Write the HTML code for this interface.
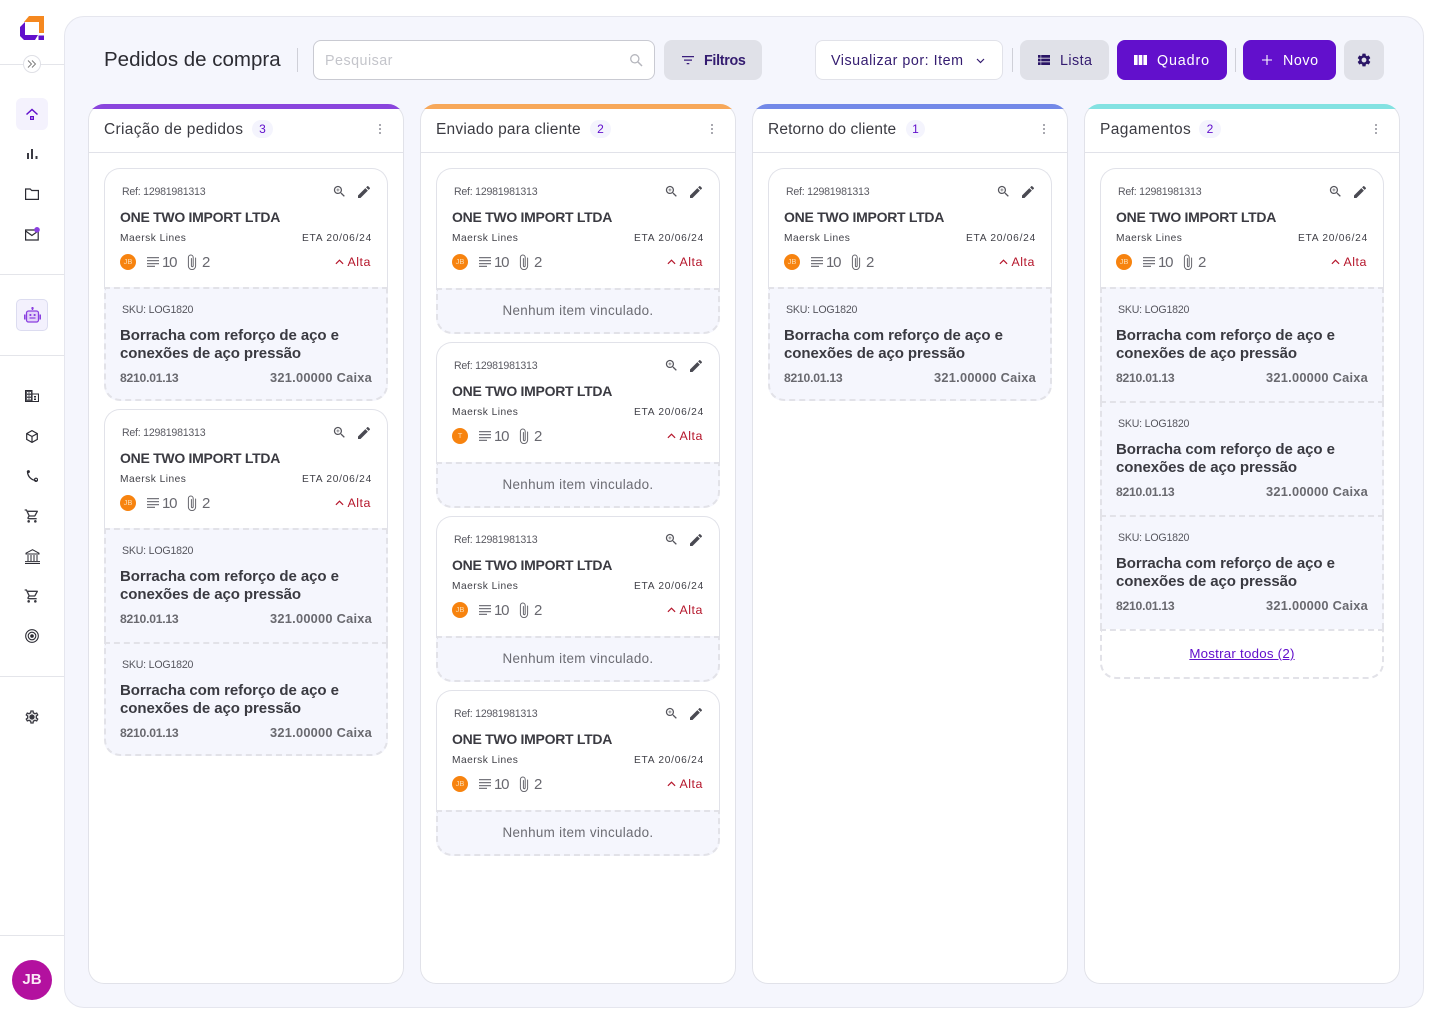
<!DOCTYPE html>
<html lang="pt-BR"><head><meta charset="utf-8"><title>Pedidos de compra</title>
<style>
*{box-sizing:border-box;margin:0;padding:0}
html,body{width:1440px;height:1024px;overflow:hidden;background:#fff;font-family:"Liberation Sans",sans-serif;color:#2b2b33}
.a,.t,svg{position:absolute}
.t{white-space:nowrap;line-height:1}
.hr{position:absolute;left:0;width:64px;height:1px;background:#e4e5ea}
#main{position:absolute;left:64px;top:16px;width:1360px;height:992px;background:#f5f6fd;border:1px solid #e5e6ee;border-radius:20px}
.btn{position:absolute;top:40px;height:40px;border-radius:8px}
.grey{background:#e0e1e8}.pur{background:#6210cc}
.col{position:absolute;top:104px;width:316px;height:880px;background:#fff;box-shadow:inset 0 0 0 1px #e1e2e9;border-radius:16px;overflow:hidden}
.col>*{margin:1px 0 0 1px}
.col>.bar{position:absolute;margin:0;left:0;top:0;width:100%;height:5px}
.ch{position:absolute;left:0;top:47px;width:100%;height:1px;background:#e1e2e9}
.ct{left:15px;top:17px;font-size:15.5px;color:#3b3b42}
.bd{position:absolute;top:15px;height:18px;border-radius:9px;background:#f4f4fd;color:#6210cc;font-size:12px;line-height:18px;text-align:center}
.dots{position:absolute;left:290px;top:19px;width:2px;height:2px;background:#a9a9b0;box-shadow:0 4px 0 #a9a9b0,0 8px 0 #a9a9b0}
.card{position:absolute;left:15px;width:284px;background:#fff;border-radius:16px}
.cb{position:absolute;left:0;top:0;width:284px;height:121px;border:1px solid #e1e2e9;border-bottom:0;border-radius:16px 16px 0 0}
.ref{left:18px;top:19px;font-size:10.6px;letter-spacing:-.24px;color:#5a5a62}
.co{left:16px;top:42px;font-size:14px;font-weight:bold;letter-spacing:-.28px;color:#3a3a41}
.ml{left:16px;top:66px;font-size:10.2px;letter-spacing:.48px;color:#3f3f46}
.eta{right:16px;top:66px;font-size:10.2px;letter-spacing:.75px;color:#3f3f46}
.av{position:absolute;left:16px;top:86px;width:16px;height:16px;border-radius:50%;background:#f7830f;color:#fcdcb0;font-size:7.5px;line-height:16px;text-align:center}
.n{font-size:15px;color:#68686f;top:87px}
.n10{letter-spacing:-1.2px}
.alta{right:17px;top:88px;font-size:12.4px;letter-spacing:.55px;color:#b5162b}
.it{position:absolute;left:0;width:284px;height:114px;background:#f5f6fd;border:2px dashed #e2e2e8;border-width:2px 2px 0 2px}
.it.last{height:114px;border-bottom-width:2px;border-radius:0 0 16px 16px}
.sku{left:16px;top:16px;font-size:10.6px;letter-spacing:-.2px;color:#56565e}
.ti{left:14px;top:38px;font-size:15px;font-weight:bold;line-height:18px;letter-spacing:-.07px;color:#3a3a41;white-space:normal;width:262px}
.nc{left:14px;top:83px;font-size:12.2px;font-weight:bold;letter-spacing:-.26px;color:#69696f}
.qt{right:14px;top:83px;font-size:12.8px;font-weight:bold;letter-spacing:.25px;color:#69696f}
.em{position:absolute;left:0;top:120px;width:284px;height:46px;background:#f5f6fd;border:2px dashed #e2e2e8;border-radius:0 0 16px 16px;font-size:13.4px;letter-spacing:.33px;color:#6b6b72;line-height:42px;text-align:center}
.ic{fill:#3a3a42}
</style></head>
<body>
<svg width="0" height="0" style="position:absolute">
<symbol id="zoom" viewBox="0 0 24 24"><path d="M15.5 14h-.79l-.28-.27C15.41 12.59 16 11.11 16 9.5 16 5.91 13.09 3 9.5 3S3 5.91 3 9.5 5.91 16 9.5 16c1.61 0 3.09-.59 4.23-1.57l.27.28v.79l5 4.99L20.49 19l-4.99-5zm-6 0C7.01 14 5 11.99 5 9.5S7.01 5 9.5 5 14 7.01 14 9.5 11.99 14 9.5 14z"/><path d="M12 10h-2v2H9v-2H7V9h2V7h1v2h2v1z"/></symbol>
<symbol id="edit" viewBox="0 0 24 24"><path d="M3 17.25V21h3.75L17.81 9.94l-3.75-3.75L3 17.25zM20.71 7.04c.39-.39.39-1.02 0-1.41l-2.34-2.34c-.39-.39-1.02-.39-1.41 0l-1.83 1.83 3.75 3.75 1.83-1.83z"/></symbol>
<symbol id="lines" viewBox="0 0 12 10"><path d="M0 0h12v1.200H0zM0 3h12v1.200H0zM0 6h12v1.200H0zM0 8.800h8V10H0z"/></symbol>
<symbol id="clip" viewBox="0 0 10 16"><path d="M8.600 4v8a3.600 3.600 0 0 1-7.200 0V3.400a2.400 2.400 0 0 1 4.800 0v8.400a.9.9 0 0 1-1.800 0V4.500" fill="none" stroke="currentColor" stroke-width="1" stroke-linecap="round"/></symbol>
<symbol id="up" viewBox="0 0 10 6"><path d="M1 5l4-4 4 4" fill="none" stroke="#b5162b" stroke-width="1.300"/></symbol>
<symbol id="gear" viewBox="0 0 24 24"><path d="M19.14 12.94c.04-.3.06-.61.06-.94 0-.32-.02-.64-.07-.94l2.03-1.58c.18-.14.23-.41.12-.61l-1.92-3.32c-.12-.22-.37-.29-.59-.22l-2.39.96c-.5-.38-1.03-.7-1.62-.94l-.36-2.54c-.04-.24-.24-.41-.48-.41h-3.84c-.24 0-.43.17-.47.41l-.36 2.54c-.59.24-1.13.57-1.62.94l-2.39-.96c-.22-.08-.47 0-.59.22L2.74 8.87c-.12.21-.08.47.12.61l2.03 1.58c-.05.3-.09.63-.09.94s.02.64.07.94l-2.03 1.58c-.18.14-.23.41-.12.61l1.92 3.32c.12.22.37.29.59.22l2.39-.96c.5.38 1.03.7 1.62.94l.36 2.54c.05.24.24.41.48.41h3.84c.24 0 .44-.17.47-.41l.36-2.54c.59-.24 1.13-.56 1.62-.94l2.39.96c.22.08.47 0 .59-.22l1.92-3.32c.12-.22.07-.47-.12-.61l-2.01-1.58zM12 15.6c-1.98 0-3.6-1.62-3.6-3.6s1.62-3.6 3.6-3.6 3.6 1.62 3.6 3.6-1.62 3.6-3.6 3.6z"/></symbol>
<symbol id="gearo" viewBox="0 0 24 24"><path d="M19.43 12.98c.04-.32.07-.64.07-.98 0-.34-.03-.66-.07-.98l2.11-1.65c.19-.15.24-.42.12-.64l-2-3.46c-.09-.16-.26-.25-.44-.25-.06 0-.12.01-.17.03l-2.49 1c-.52-.4-1.08-.73-1.69-.98l-.38-2.65C14.46 2.18 14.25 2 14 2h-4c-.25 0-.46.18-.49.42l-.38 2.65c-.61.25-1.17.59-1.69.98l-2.49-1c-.06-.02-.12-.03-.18-.03-.17 0-.34.09-.43.25l-2 3.46c-.13.22-.07.49.12.64l2.11 1.65c-.04.32-.07.65-.07.98 0 .33.03.66.07.98l-2.11 1.65c-.19.15-.24.42-.12.64l2 3.46c.09.16.26.25.44.25.06 0 .12-.01.17-.03l2.49-1c.52.4 1.08.73 1.69.98l.38 2.65c.03.24.24.42.49.42h4c.25 0 .46-.18.49-.42l.38-2.65c.61-.25 1.17-.59 1.69-.98l2.49 1c.06.02.12.03.18.03.17 0 .34-.09.43-.25l2-3.46c.12-.22.07-.49-.12-.64l-2.11-1.65zm-1.98-1.71c.04.31.05.52.05.73 0 .21-.02.43-.05.73l-.14 1.13.89.7 1.08.84-.7 1.21-1.27-.51-1.04-.42-.9.68c-.43.32-.84.56-1.25.73l-1.06.43-.16 1.13-.2 1.35h-1.4l-.19-1.35-.16-1.13-1.06-.43c-.43-.18-.83-.41-1.23-.71l-.91-.7-1.06.43-1.27.51-.7-1.21 1.08-.84.89-.7-.14-1.13c-.03-.31-.05-.54-.05-.74s.02-.43.05-.73l.14-1.13-.89-.7-1.08-.84.7-1.21 1.27.51 1.04.42.9-.68c.43-.32.84-.56 1.25-.73l1.06-.43.16-1.13.2-1.35h1.39l.19 1.35.16 1.13 1.06.43c.43.18.83.41 1.23.71l.91.7 1.06-.43 1.27-.51.7 1.21-1.07.85-.89.7.14 1.13zM12 8c-2.21 0-4 1.79-4 4s1.79 4 4 4 4-1.79 4-4-1.79-4-4-4z"/></symbol>
<symbol id="cart" viewBox="0 0 24 24"><path d="M15.55 13c.75 0 1.41-.41 1.75-1.03l3.58-6.49c.37-.66-.11-1.48-.87-1.48H5.21l-.94-2H1v2h2l3.6 7.59-1.35 2.44C4.52 15.37 5.48 17 7 17h12v-2H7l1.1-2h7.45zM6.16 6h12.15l-2.76 5H8.53L6.16 6zM7 18c-1.1 0-1.99.9-1.99 2S5.9 22 7 22s2-.9 2-2-.9-2-2-2zm10 0c-1.1 0-1.99.9-1.99 2s.89 2 1.99 2 2-.9 2-2-.9-2-2-2z"/></symbol>
</svg>

<!-- logo -->
<svg style="left:20px;top:16px" width="24" height="24" viewBox="0 0 24 24"><path d="M9 0h15v17h-5V6H4z" fill="#f5881f"/><path d="M5 6L0 11v9l4 4h11l3-5H5z" fill="#6210cc"/><path d="M18.500 19.500H24V24h-5.500z" fill="#6210cc"/></svg>
<div class="hr" style="top:64px"></div>
<div class="a" style="left:23px;top:55px;width:18px;height:18px;border-radius:50%;background:#fff;border:1px solid #dfe0e6"></div>
<svg style="left:27px;top:60px" width="10" height="8" viewBox="0 0 10 8"><path d="M1 .5L4.500 4 1 7.500M5 .5L8.500 4 5 7.500" fill="none" stroke="#777" stroke-width=".9"/></svg>

<div class="a" style="left:16px;top:98px;width:32px;height:32px;border-radius:6px;background:#f4f2fd"></div>
<svg style="left:26px;top:108px" width="12" height="12" viewBox="0 0 12 12"><path d="M.5 6.500L6 1.500l5.500 5" fill="none" stroke="#6210cc" stroke-width="1.500"/><path d="M4 8h4v4H4z" fill="#6210cc"/><path d="M5.300 9.300h1.400v1.400H5.300z" fill="#f4f2fd"/></svg>
<svg style="left:27px;top:149px" width="11" height="10" viewBox="0 0 11 10"><path d="M0 4h2v6H0zM4 0h2v10H4zM8.500 7h2v3h-2z" fill="#3a3a42"/></svg>
<svg style="left:25px;top:188px" width="14" height="12" viewBox="0 0 14 12"><path d="M.6 1h4.600l1.500 1.500h6.700v8.900H.6z" fill="none" stroke="#2b2b33" stroke-width="1.200"/></svg>
<svg style="left:25px;top:227px" width="15" height="14" viewBox="0 0 15 14"><path d="M.6 3h12.600v10H.6z" fill="none" stroke="#2b2b33" stroke-width="1.200"/><path d="M.6 4l6.300 4.500L13.200 4" fill="none" stroke="#2b2b33" stroke-width="1.200"/><circle cx="12" cy="2.800" r="2.800" fill="#8a3fe0"/></svg>
<div class="hr" style="top:274px"></div>
<div class="a" style="left:16px;top:299px;width:32px;height:32px;border-radius:5px;background:#f3f1fd;border:1px solid #dcdcf0"></div>
<svg style="left:24px;top:307px" width="17" height="16" viewBox="0 0 17 16"><path d="M8.500 0v3" stroke="#8a3fe0" stroke-width="1.400"/><circle cx="8.500" cy="1.200" r="1.200" fill="#8a3fe0"/><rect x="2.500" y="4" width="12" height="11" rx="2" fill="#e3d3f9" stroke="#8a3fe0" stroke-width="1.300"/><path d="M0 7.500h1.500v5H0zM15.500 7.500H17v5h-1.500z" fill="#8a3fe0"/><rect x="5.500" y="7" width="1.800" height="2" fill="#8a3fe0"/><rect x="9.700" y="7" width="1.800" height="2" fill="#8a3fe0"/><path d="M5.500 11h6" stroke="#8a3fe0" stroke-width="1.200"/></svg>
<div class="hr" style="top:355px"></div>
<svg style="left:25px;top:390px" width="14" height="12" viewBox="0 0 14 12"><path d="M.5.500h6.500v11H.500z" fill="#55555c" stroke="#2b2b33" stroke-width="1"/><path d="M7 4h6.500v7.500H7z" fill="none" stroke="#2b2b33" stroke-width="1.100"/><path d="M2 2h1.500v1.500H2zM4.500 2H6v1.500H4.500zM2 5h1.500v1.500H2zM4.500 5H6v1.500H4.500zM2 8h1.500v1.500H2zM4.500 8H6v1.500H4.500z" fill="#fff"/><path d="M9 6h2v1.500H9zM9 8.500h2V10H9z" fill="#2b2b33"/></svg>
<svg style="left:26px;top:430px" width="12" height="13" viewBox="0 0 12 13"><path d="M6 .6l5.300 3v5.800L6 12.400.7 9.400V3.600zM.7 3.600L6 6.500l5.300-2.900M6 6.500v5.900" fill="none" stroke="#2b2b33" stroke-width="1.200"/></svg>
<svg style="left:26px;top:470px" width="12" height="12" viewBox="0 0 12 12"><path d="M1.500 1.200C1.500 6.500 5.500 10.500 10.500 10.500" fill="none" stroke="#2b2b33" stroke-width="1.300"/><circle cx="2.400" cy="1.600" r="1.500" fill="#2b2b33"/><circle cx="10" cy="9.800" r="1.600" fill="none" stroke="#2b2b33" stroke-width="1.100"/></svg>
<svg class="ic" style="left:24px;top:508px" width="16" height="16"><use href="#cart"/></svg>
<svg style="left:25px;top:549px" width="15" height="15" viewBox="0 0 15 15"><path d="M7.500.7L14 4.200v.8H1v-.8z" fill="none" stroke="#2b2b33" stroke-width="1"/><path d="M3 6v6M6 6v6M9 6v6M12 6v6" stroke="#2b2b33" stroke-width="1"/><path d="M0 12.600h15M0 14.500h15" stroke="#2b2b33" stroke-width="1"/></svg>
<svg class="ic" style="left:24px;top:588px" width="16" height="16"><use href="#cart"/></svg>
<svg style="left:25px;top:629px" width="14" height="14" viewBox="0 0 14 14"><g fill="none" stroke="#2b2b33"><circle cx="7" cy="7" r="6.300" stroke-width="1.100"/><circle cx="7" cy="7" r="3.800" stroke-width="1.100"/></g><circle cx="7" cy="7" r="1.800" fill="#2b2b33"/></svg>
<div class="hr" style="top:676px"></div>
<svg class="ic" style="left:24px;top:709px" width="16" height="16"><use href="#gearo"/></svg>
<div class="hr" style="top:935px"></div>
<div class="a" style="left:12px;top:960px;width:40px;height:40px;border-radius:50%;background:#b3119f;color:#fbe9f7;font-size:15px;font-weight:bold;line-height:40px;text-align:center">JB</div>

<div id="main"></div>

<!-- toolbar -->
<div class="t" style="left:104px;top:50px;font-size:20.500px;color:#2c2c33">Pedidos de compra</div>
<div class="a" style="left:297px;top:48px;width:1px;height:24px;background:#cfd0d8"></div>
<div class="a" style="left:313px;top:40px;width:342px;height:40px;background:#fff;border:1px solid #c9cad2;border-radius:8px"></div>
<div class="t" style="left:325px;top:54px;font-size:14.300px;letter-spacing:.48px;color:#c4c5cb">Pesquisar</div>
<svg style="left:629px;top:53px" width="14" height="14" viewBox="0 0 14 14"><circle cx="5.800" cy="5.800" r="4.100" fill="none" stroke="#b5b6bd" stroke-width="1.300"/><path d="M9 9l4 4" stroke="#b5b6bd" stroke-width="1.500"/></svg>
<div class="btn grey" style="left:664px;width:98px"></div>
<svg style="left:682px;top:56px" width="12" height="9" viewBox="0 0 12 9"><path d="M0 0h12v1.300H0zM2 3.500h8v1.300H2zM4.700 7h2.600v1.300H4.700z" fill="#3a1d7c"/></svg>
<div class="t" style="left:704px;top:54px;font-size:14.300px;font-weight:bold;letter-spacing:-.3px;color:#341c70">Filtros</div>

<div class="a" style="left:815px;top:40px;width:188px;height:40px;background:#fff;border:1px solid #e1e2e9;border-radius:8px"></div>
<div class="t" style="left:831px;top:54px;font-size:14.300px;letter-spacing:.52px;color:#341c70">Visualizar por: Item</div>
<svg style="left:976px;top:58px" width="9" height="6" viewBox="0 0 9 6"><path d="M1 1l3.500 3.500L8 1" fill="none" stroke="#341c70" stroke-width="1.200"/></svg>
<div class="a" style="left:1012px;top:48px;width:1px;height:24px;background:#cfd0d8"></div>
<div class="btn grey" style="left:1020px;width:89px"></div>
<svg style="left:1038px;top:55px" width="12" height="10" viewBox="0 0 12 10"><path d="M0 0h2.600v2.800H0zM3.200 0H12v2.800H3.200zM0 3.600h2.600v2.800H0zM3.200 3.600H12v2.800H3.200zM0 7.200h2.600V10H0zM3.200 7.200H12V10H3.200z" fill="#2a1566"/></svg>
<div class="t" style="left:1060px;top:54px;font-size:14.300px;letter-spacing:.45px;color:#341c70">Lista</div>
<div class="btn pur" style="left:1117px;width:110px"></div>
<svg style="left:1134px;top:55px" width="13" height="10" viewBox="0 0 13 10"><path d="M0 0h3.600v10H0zM4.700 0h3.600v10H4.700zM9.400 0H13v10H9.400z" fill="#fff"/></svg>
<div class="t" style="left:1157px;top:54px;font-size:14.300px;letter-spacing:.87px;color:#fff">Quadro</div>
<div class="a" style="left:1235px;top:48px;width:1px;height:24px;background:#cfd0d8"></div>
<div class="btn pur" style="left:1243px;width:93px"></div>
<svg style="left:1262px;top:55px" width="10" height="10" viewBox="0 0 10 10"><path d="M5 0v10M0 5h10" stroke="#fff" stroke-width="1.100"/></svg>
<div class="t" style="left:1283px;top:54px;font-size:14.300px;letter-spacing:.55px;color:#fff">Novo</div>
<div class="btn grey" style="left:1344px;width:40px"></div>
<svg style="left:1356px;top:52px;fill:#2a1566" width="16" height="16"><use href="#gear"/></svg>

<!-- COLUMN 1 -->
<div class="col" style="left:88px">
<div class="bar" style="background:#8a45dd"></div><div class="t ct" style="letter-spacing:.32px">Criação de pedidos</div><div class="bd" style="left:163px;width:21px">3</div><div class="dots"></div><div class="ch"></div>
<div class="card" style="top:63px;height:233px"><div class="cb"></div>
<div class="t ref">Ref: 12981981313</div><svg style="left:228px;top:16px;fill:#55555c" width="15" height="15"><use href="#zoom"/></svg><svg style="left:252px;top:16px;fill:#4a4a52" width="16" height="16"><use href="#edit"/></svg>
<div class="t co">ONE TWO IMPORT LTDA</div><div class="t ml">Maersk Lines</div><div class="t eta">ETA 20/06/24</div>
<div class="av">JB</div><svg style="left:43px;top:89px;fill:#77777e" width="12" height="10"><use href="#lines"/></svg><div class="t n n10" style="left:58px">10</div><svg style="left:83px;top:86px;color:#66666d" width="10" height="16"><use href="#clip"/></svg><div class="t n" style="left:98px">2</div>
<svg style="left:231px;top:91px" width="9" height="6"><use href="#up"/></svg><div class="t alta">Alta</div>
<div class="it last" style="top:119px"><div class="t sku">SKU: LOG1820</div><div class="t ti">Borracha com reforço de aço e conexões de aço pressão</div><div class="t nc">8210.01.13</div><div class="t qt">321.00000 Caixa</div></div>
</div>
<div class="card" style="top:304px;height:347px"><div class="cb"></div>
<div class="t ref">Ref: 12981981313</div><svg style="left:228px;top:16px;fill:#55555c" width="15" height="15"><use href="#zoom"/></svg><svg style="left:252px;top:16px;fill:#4a4a52" width="16" height="16"><use href="#edit"/></svg>
<div class="t co">ONE TWO IMPORT LTDA</div><div class="t ml">Maersk Lines</div><div class="t eta">ETA 20/06/24</div>
<div class="av">JB</div><svg style="left:43px;top:89px;fill:#77777e" width="12" height="10"><use href="#lines"/></svg><div class="t n n10" style="left:58px">10</div><svg style="left:83px;top:86px;color:#66666d" width="10" height="16"><use href="#clip"/></svg><div class="t n" style="left:98px">2</div>
<svg style="left:231px;top:91px" width="9" height="6"><use href="#up"/></svg><div class="t alta">Alta</div>
<div class="it" style="top:119px"><div class="t sku">SKU: LOG1820</div><div class="t ti">Borracha com reforço de aço e conexões de aço pressão</div><div class="t nc">8210.01.13</div><div class="t qt">321.00000 Caixa</div></div>
<div class="it last" style="top:233px"><div class="t sku">SKU: LOG1820</div><div class="t ti">Borracha com reforço de aço e conexões de aço pressão</div><div class="t nc">8210.01.13</div><div class="t qt">321.00000 Caixa</div></div>
</div>
</div>

<!-- COLUMN 2 -->
<div class="col" style="left:420px">
<div class="bar" style="background:#f7a85a"></div><div class="t ct" style="letter-spacing:.22px">Enviado para cliente</div><div class="bd" style="left:169px;width:21px">2</div><div class="dots"></div><div class="ch"></div>
<div class="card" style="top:63px;height:166px"><div class="cb"></div>
<div class="t ref">Ref: 12981981313</div><svg style="left:228px;top:16px;fill:#55555c" width="15" height="15"><use href="#zoom"/></svg><svg style="left:252px;top:16px;fill:#4a4a52" width="16" height="16"><use href="#edit"/></svg>
<div class="t co">ONE TWO IMPORT LTDA</div><div class="t ml">Maersk Lines</div><div class="t eta">ETA 20/06/24</div>
<div class="av">JB</div><svg style="left:43px;top:89px;fill:#77777e" width="12" height="10"><use href="#lines"/></svg><div class="t n n10" style="left:58px">10</div><svg style="left:83px;top:86px;color:#66666d" width="10" height="16"><use href="#clip"/></svg><div class="t n" style="left:98px">2</div>
<svg style="left:231px;top:91px" width="9" height="6"><use href="#up"/></svg><div class="t alta">Alta</div>
<div class="em">Nenhum item vinculado.</div></div>
<div class="card" style="top:237px;height:166px"><div class="cb"></div>
<div class="t ref">Ref: 12981981313</div><svg style="left:228px;top:16px;fill:#55555c" width="15" height="15"><use href="#zoom"/></svg><svg style="left:252px;top:16px;fill:#4a4a52" width="16" height="16"><use href="#edit"/></svg>
<div class="t co">ONE TWO IMPORT LTDA</div><div class="t ml">Maersk Lines</div><div class="t eta">ETA 20/06/24</div>
<div class="av">T</div><svg style="left:43px;top:89px;fill:#77777e" width="12" height="10"><use href="#lines"/></svg><div class="t n n10" style="left:58px">10</div><svg style="left:83px;top:86px;color:#66666d" width="10" height="16"><use href="#clip"/></svg><div class="t n" style="left:98px">2</div>
<svg style="left:231px;top:91px" width="9" height="6"><use href="#up"/></svg><div class="t alta">Alta</div>
<div class="em">Nenhum item vinculado.</div></div>
<div class="card" style="top:411px;height:166px"><div class="cb"></div>
<div class="t ref">Ref: 12981981313</div><svg style="left:228px;top:16px;fill:#55555c" width="15" height="15"><use href="#zoom"/></svg><svg style="left:252px;top:16px;fill:#4a4a52" width="16" height="16"><use href="#edit"/></svg>
<div class="t co">ONE TWO IMPORT LTDA</div><div class="t ml">Maersk Lines</div><div class="t eta">ETA 20/06/24</div>
<div class="av">JB</div><svg style="left:43px;top:89px;fill:#77777e" width="12" height="10"><use href="#lines"/></svg><div class="t n n10" style="left:58px">10</div><svg style="left:83px;top:86px;color:#66666d" width="10" height="16"><use href="#clip"/></svg><div class="t n" style="left:98px">2</div>
<svg style="left:231px;top:91px" width="9" height="6"><use href="#up"/></svg><div class="t alta">Alta</div>
<div class="em">Nenhum item vinculado.</div></div>
<div class="card" style="top:585px;height:166px"><div class="cb"></div>
<div class="t ref">Ref: 12981981313</div><svg style="left:228px;top:16px;fill:#55555c" width="15" height="15"><use href="#zoom"/></svg><svg style="left:252px;top:16px;fill:#4a4a52" width="16" height="16"><use href="#edit"/></svg>
<div class="t co">ONE TWO IMPORT LTDA</div><div class="t ml">Maersk Lines</div><div class="t eta">ETA 20/06/24</div>
<div class="av">JB</div><svg style="left:43px;top:89px;fill:#77777e" width="12" height="10"><use href="#lines"/></svg><div class="t n n10" style="left:58px">10</div><svg style="left:83px;top:86px;color:#66666d" width="10" height="16"><use href="#clip"/></svg><div class="t n" style="left:98px">2</div>
<svg style="left:231px;top:91px" width="9" height="6"><use href="#up"/></svg><div class="t alta">Alta</div>
<div class="em">Nenhum item vinculado.</div></div>
</div>

<!-- COLUMN 3 -->
<div class="col" style="left:752px">
<div class="bar" style="background:#7389e8"></div><div class="t ct" style="letter-spacing:.14px">Retorno do cliente</div><div class="bd" style="left:153px;width:19px">1</div><div class="dots"></div><div class="ch"></div>
<div class="card" style="top:63px;height:233px"><div class="cb"></div>
<div class="t ref">Ref: 12981981313</div><svg style="left:228px;top:16px;fill:#55555c" width="15" height="15"><use href="#zoom"/></svg><svg style="left:252px;top:16px;fill:#4a4a52" width="16" height="16"><use href="#edit"/></svg>
<div class="t co">ONE TWO IMPORT LTDA</div><div class="t ml">Maersk Lines</div><div class="t eta">ETA 20/06/24</div>
<div class="av">JB</div><svg style="left:43px;top:89px;fill:#77777e" width="12" height="10"><use href="#lines"/></svg><div class="t n n10" style="left:58px">10</div><svg style="left:83px;top:86px;color:#66666d" width="10" height="16"><use href="#clip"/></svg><div class="t n" style="left:98px">2</div>
<svg style="left:231px;top:91px" width="9" height="6"><use href="#up"/></svg><div class="t alta">Alta</div>
<div class="it last" style="top:119px"><div class="t sku">SKU: LOG1820</div><div class="t ti">Borracha com reforço de aço e conexões de aço pressão</div><div class="t nc">8210.01.13</div><div class="t qt">321.00000 Caixa</div></div>
</div>
</div>

<!-- COLUMN 4 -->
<div class="col" style="left:1084px">
<div class="bar" style="background:#83e2e2"></div><div class="t ct" style="letter-spacing:.42px">Pagamentos</div><div class="bd" style="left:114px;width:22px">2</div><div class="dots"></div><div class="ch"></div>
<div class="card" style="top:63px;height:511px"><div class="cb"></div>
<div class="t ref">Ref: 12981981313</div><svg style="left:228px;top:16px;fill:#55555c" width="15" height="15"><use href="#zoom"/></svg><svg style="left:252px;top:16px;fill:#4a4a52" width="16" height="16"><use href="#edit"/></svg>
<div class="t co">ONE TWO IMPORT LTDA</div><div class="t ml">Maersk Lines</div><div class="t eta">ETA 20/06/24</div>
<div class="av">JB</div><svg style="left:43px;top:89px;fill:#77777e" width="12" height="10"><use href="#lines"/></svg><div class="t n n10" style="left:58px">10</div><svg style="left:83px;top:86px;color:#66666d" width="10" height="16"><use href="#clip"/></svg><div class="t n" style="left:98px">2</div>
<svg style="left:231px;top:91px" width="9" height="6"><use href="#up"/></svg><div class="t alta">Alta</div>
<div class="it" style="top:119px"><div class="t sku">SKU: LOG1820</div><div class="t ti">Borracha com reforço de aço e conexões de aço pressão</div><div class="t nc">8210.01.13</div><div class="t qt">321.00000 Caixa</div></div>
<div class="it" style="top:233px"><div class="t sku">SKU: LOG1820</div><div class="t ti">Borracha com reforço de aço e conexões de aço pressão</div><div class="t nc">8210.01.13</div><div class="t qt">321.00000 Caixa</div></div>
<div class="it" style="top:347px"><div class="t sku">SKU: LOG1820</div><div class="t ti">Borracha com reforço de aço e conexões de aço pressão</div><div class="t nc">8210.01.13</div><div class="t qt">321.00000 Caixa</div></div>
<div class="a" style="left:0;top:461px;width:284px;height:50px;background:#fff;border:2px dashed #e2e2e8;border-radius:0 0 16px 16px;text-align:center;line-height:46px;font-size:13.300px;letter-spacing:.24px;color:#6210cc;text-decoration:underline">Mostrar todos (2)</div>
</div>
</div>
</body></html>
